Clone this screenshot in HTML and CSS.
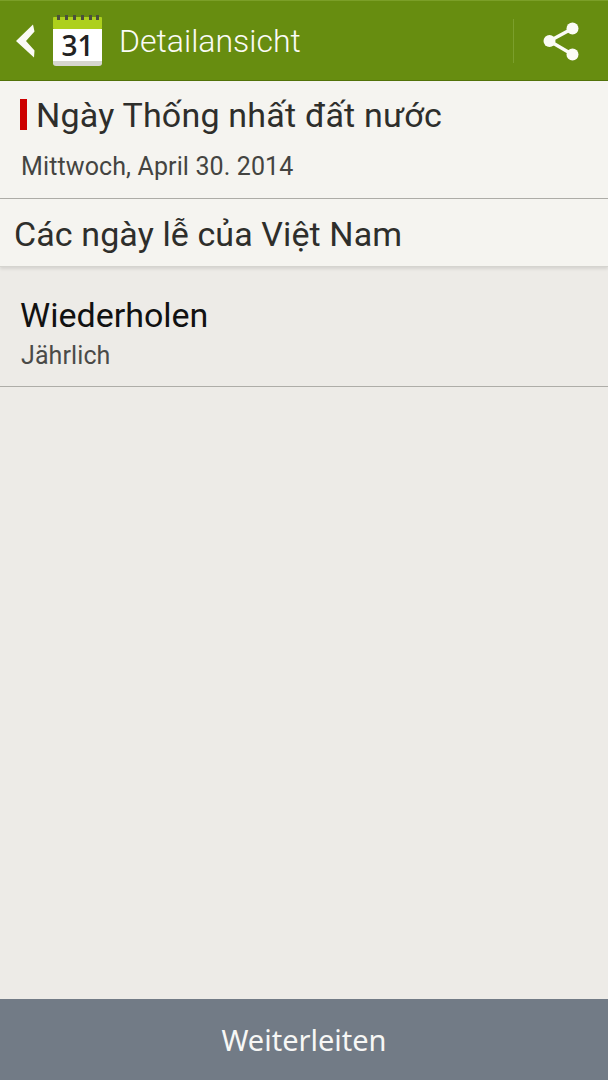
FILE: index.html
```html
<!DOCTYPE html>
<html lang="en">
<head>
  <meta charset="UTF-8" />
  <title>Detailansicht</title>
  <link rel="stylesheet" href="styles.css">
</head>
<body>
  <div class="app">
    <!-- Action bar -->
    <header class="action-bar">
      <svg class="back-icon" width="20" height="36" viewBox="0 0 20 36">
        <path d="M18 1.500 L19.500 8.500 L11 18 L19.500 27.500 L19 34.500 L1 18 Z" fill="#fbfbf6"/>
      </svg>
      <svg class="cal-icon" width="50" height="52" viewBox="0 0 50 52">
        <path d="M0 14 H49 V47 a3 3 0 0 1 -3 3 H3 a3 3 0 0 1 -3 -3 Z" fill="#ffffff"/>
        <path d="M0 46 H49 V48 a3 3 0 0 1 -3 3 H3 a3 3 0 0 1 -3 -3 Z" fill="#d6d6cf"/>
        <rect x="0" y="2" width="49" height="12" rx="1" fill="#add01c"/>
        <g fill="#4a4f3c">
          <rect x="4" y="0" width="3" height="5"/>
          <rect x="12" y="0" width="3" height="5"/>
          <rect x="20" y="0" width="3" height="5"/>
          <rect x="28" y="0" width="3" height="5"/>
          <rect x="36" y="0" width="3" height="5"/>
          <rect x="43" y="0" width="3" height="5"/>
        </g>
        <text class="cal-day" x="24.500" y="41" text-anchor="middle">31</text>
      </svg>
      <h1 class="bar-title">Detailansicht</h1>
      <div class="bar-divider"></div>
      <svg class="share-icon" width="38" height="42" viewBox="0 0 38 42">
        <path d="M6.500 21 L29.500 8.500 M6.500 21 L29.500 34.500" stroke="#fbfbf6" stroke-width="3.500" fill="none"/>
        <circle cx="6.500" cy="21" r="6" fill="#fbfbf6"/>
        <circle cx="29.500" cy="8.500" r="6" fill="#fbfbf6"/>
        <circle cx="29.500" cy="34.500" r="6" fill="#fbfbf6"/>
      </svg>
    </header>

    <section class="event-head">
      <div class="event-title">
        <span class="event-mark"></span>
        <span>Ngày Thống nhất đất nước</span>
      </div>
      <div class="event-date">Mittwoch, April 30. 2014</div>
    </section>

    <section class="event-calendar">Các ngày lễ của Việt Nam</section>

    <section class="event-repeat">
      <div class="repeat-label">Wiederholen</div>
      <div class="repeat-value">Jährlich</div>
    </section>

    <div class="spacer"></div>

    <button class="forward-btn" type="button">Weiterleiten</button>
  </div>
</body>
</html>
```

FILE: styles.css
```css
html, body {
  height: 100%;
  margin: 0;
  padding: 0;
  font-family: Roboto, sans-serif;
}

.app {
  display: flex;
  flex-direction: column;
  height: 1080px;
  background-color: #edebe7;
  overflow: hidden;
}

.action-bar {
  display: flex;
  align-items: center;
  flex: none;
  height: 81px;
  box-sizing: border-box;
  border-top: 1px solid #7b9f28;
  border-bottom: 1px solid #527209;
  background-color: #678d10;
}

.back-icon {
  margin-left: 15px;
  flex: none;
}

.cal-icon {
  margin-left: 18px;
  flex: none;
}

.cal-day {
  font-family: "Open Sans", sans-serif;
  font-size: 28px;
  font-weight: 600;
  fill: #222222;
}

.bar-title {
  margin: 0 0 0 16px;
  flex: 1;
  font-size: 32px;
  font-weight: 300;
  color: #fbfbf6;
}

.bar-divider {
  flex: none;
  width: 1px;
  height: 44px;
  background-color: #7b9f2c;
}

.share-icon {
  margin: 0 27px 0 29px;
  flex: none;
}

.event-head {
  flex: none;
  height: 118px;
  box-sizing: border-box;
  padding: 13px 0 0 20px;
  border-bottom: 1px solid #aeada8;
  background-color: #f5f4f0;
}

.event-title {
  display: flex;
  align-items: center;
  gap: 9px;
  font-size: 34px;
  letter-spacing: 0.2px;
  line-height: 42px;
  color: #2e2e2b;
}

.event-mark {
  flex: none;
  width: 7px;
  height: 31px;
  margin-bottom: 2px;
  background-color: #cc0000;
}

.event-date {
  margin: 16px 0 0 1px;
  font-size: 25px;
  letter-spacing: 0.12px;
  line-height: 30px;
  color: #444441;
}

.event-calendar {
  flex: none;
  height: 68px;
  box-sizing: border-box;
  padding-left: 14px;
  font-size: 34px;
  letter-spacing: 0.1px;
  line-height: 70px;
  color: #2e2e2b;
  border-bottom: 1px solid #d5d4cf;
  background-color: #f5f4f0;
  box-shadow: 0 2px 3px rgba(0, 0, 0, 0.1);
}

.event-repeat {
  flex: none;
  height: 120px;
  box-sizing: border-box;
  padding: 27px 0 0 20px;
  border-bottom: 1px solid #aeada8;
}

.repeat-label {
  font-size: 34px;
  line-height: 42px;
  color: #111111;
}

.repeat-value {
  margin-left: 1px;
  font-size: 25px;
  letter-spacing: 0.1px;
  line-height: 40px;
  color: #4a4a48;
}

.spacer {
  flex: 1;
}

.forward-btn {
  flex: none;
  height: 81px;
  padding: 0;
  border: none;
  font-family: "Noto Sans", sans-serif;
  font-size: 29px;
  color: #f7f7f5;
  background-color: #727b86;
}
```
